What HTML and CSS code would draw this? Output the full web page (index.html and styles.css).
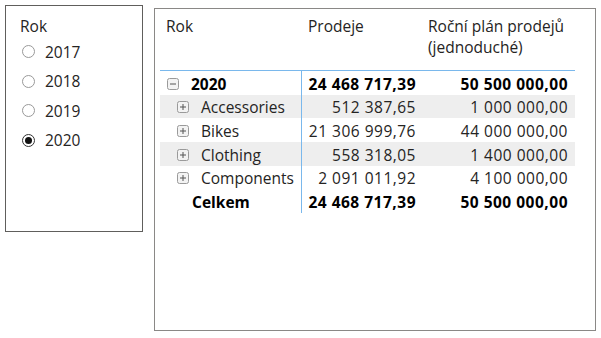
FILE: index.html
```html
<!DOCTYPE html>
<html lang="cs">
<head>
  <meta charset="UTF-8">
  <title>Prodeje podle roku</title>
  <link rel="stylesheet" href="styles.css">
</head>
<body>
  <!-- průřez Rok -->
  <div class="slicer">
    <div class="slicer-title">Rok</div>
    <div class="slicer-item"><span class="radio"></span>2017</div>
    <div class="slicer-item"><span class="radio"></span>2018</div>
    <div class="slicer-item"><span class="radio"></span>2019</div>
    <div class="slicer-item"><span class="radio checked"></span>2020</div>
  </div>

  <!-- matice -->
  <div class="matrix">
    <div class="grid">
      <div class="head c1">Rok</div>
      <div class="head c2">Prodeje</div>
      <div class="head c3">Roční plán prodejů<br>(jednoduché)</div>

      <div class="cell c1 total">
        <svg class="toggle" width="12" height="12" viewBox="0 0 12 12"><rect x="0.5" y="0.5" width="11" height="11" rx="2" fill="#f3f3f3" stroke="#9a9a9a"/><path d="M3 6h6" stroke="#555" stroke-width="1"/></svg>
        2020
      </div>
      <div class="cell c2 num total">24 468 717,39</div>
      <div class="cell c3 num total">50 500 000,00</div>

      <div class="cell c1 child band">
        <svg class="toggle" width="12" height="12" viewBox="0 0 12 12"><rect x="0.5" y="0.5" width="11" height="11" rx="2" fill="#f3f3f3" stroke="#9a9a9a"/><path d="M3 6h6M6 3v6" stroke="#555" stroke-width="1"/></svg>
        Accessories
      </div>
      <div class="cell c2 num band">512 387,65</div>
      <div class="cell c3 num band">1 000 000,00</div>

      <div class="cell c1 child">
        <svg class="toggle" width="12" height="12" viewBox="0 0 12 12"><rect x="0.5" y="0.5" width="11" height="11" rx="2" fill="#f3f3f3" stroke="#9a9a9a"/><path d="M3 6h6M6 3v6" stroke="#555" stroke-width="1"/></svg>
        Bikes
      </div>
      <div class="cell c2 num">21 306 999,76</div>
      <div class="cell c3 num">44 000 000,00</div>

      <div class="cell c1 child band">
        <svg class="toggle" width="12" height="12" viewBox="0 0 12 12"><rect x="0.5" y="0.5" width="11" height="11" rx="2" fill="#f3f3f3" stroke="#9a9a9a"/><path d="M3 6h6M6 3v6" stroke="#555" stroke-width="1"/></svg>
        Clothing
      </div>
      <div class="cell c2 num band">558 318,05</div>
      <div class="cell c3 num band">1 400 000,00</div>

      <div class="cell c1 child">
        <svg class="toggle" width="12" height="12" viewBox="0 0 12 12"><rect x="0.5" y="0.5" width="11" height="11" rx="2" fill="#f3f3f3" stroke="#9a9a9a"/><path d="M3 6h6M6 3v6" stroke="#555" stroke-width="1"/></svg>
        Components
      </div>
      <div class="cell c2 num">2 091 011,92</div>
      <div class="cell c3 num">4 100 000,00</div>

      <div class="cell c1 total grand">Celkem</div>
      <div class="cell c2 num total">24 468 717,39</div>
      <div class="cell c3 num total">50 500 000,00</div>
    </div>
  </div>
</body>
</html>
```

FILE: styles.css
```css
body {
  margin: 0;
  padding: 5px 0 0 5px;
  display: flex;
  align-items: flex-start;
  gap: 11px;
  background: #fff;
  color: #252423;
  font-family: "Open Sans", sans-serif;
  font-size: 15.5px;
}

/* průřez */
.slicer {
  border: 1px solid #605e5c;
  padding: 10px 0 0 14px;
  width: 122px;
  height: 215px;
}

.slicer-title {
  line-height: 20px;
  margin-bottom: 1px;
}

.slicer-item {
  display: flex;
  align-items: center;
  height: 29.5px;
  gap: 10px;
}

.radio {
  width: 11px;
  height: 11px;
  border: 1px solid #999;
  border-radius: 50%;
  margin-left: 2px;
  position: relative;
}

.radio.checked {
  border-color: #333;
}

.radio.checked::after {
  content: "";
  position: absolute;
  top: 2px;
  left: 2px;
  width: 7px;
  height: 7px;
  border-radius: 50%;
  background: #111;
}

/* matice */
.matrix {
  margin-top: 3px;
  width: 442px;
  height: 323px;
  border: 1px solid #8a8886;
  padding-left: 5px;
  box-sizing: border-box;
}

.grid {
  width: 415px;
  display: grid;
  grid-template-columns: 142px 120px 153px;
  grid-template-rows: 62px repeat(6, 23.67px);
}

.head {
  padding-top: 7px;
  padding-left: 6px;
  line-height: 21px;
  border-bottom: 1px solid #7ab8ec;
}

.cell {
  display: flex;
  align-items: center;
  padding-top: 2px;
  white-space: nowrap;
}

.cell.c1 {
  border-right: 1px solid #7ab8ec;
  padding-left: 7px;
  gap: 12px;
}

.cell.child { padding-left: 17px; }
.cell.grand { padding-left: 32px; }

.num {
  justify-content: flex-end;
  letter-spacing: 0.5px;
}

.cell.c2 { padding-right: 6px; }
.cell.c3 { padding-right: 7px; }

.band {
  background: #eeeeee;
}

.total {
  font-weight: bold;
  color: #000;
}

.toggle {
  flex: none;
}
```
